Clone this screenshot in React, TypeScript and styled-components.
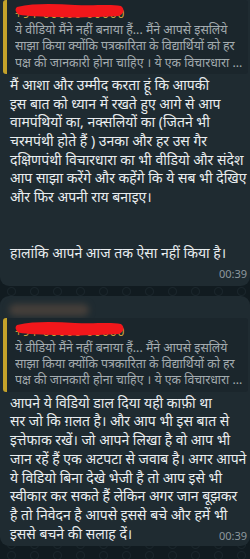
import React from "react";
import styled, { createGlobalStyle } from "styled-components";

const GlobalStyle = createGlobalStyle`
  html, body {
    margin: 0;
    padding: 0;
    background-color: #111b20;
  }
  body {
    font-family: "Noto Sans", Roboto, "Liberation Sans", sans-serif;
    overflow: hidden;
  }
`;

const Chat = styled.div`
  width: 250px;
  height: 559px;
  display: flex;
  flex-direction: column;
  gap: 10px;
  background-color: #111b20;
  background-image: radial-gradient(circle at 50% 50%, transparent 3px, #1a252b 4px, transparent 5px);
  background-size: 23px 11px;
  overflow: hidden;
`;

const Bubble: any = styled.div`
  background-color: #1f2b31;
  border-radius: ${(p: any) => (p.cut ? "0 0 9px 9px" : "9px")};
  padding: ${(p: any) => (p.cut ? "0 2px 5px 3px" : "6px 2px 3px 3px")};
  display: flex;
  flex-direction: column;
`;

const Sender = styled.div`
  width: 80px;
  height: 12px;
  margin: 2px 0 2px 6px;
  border-radius: 6px;
  background-color: #453f3a;
  filter: blur(3px);
`;

const Quote = styled.div`
  position: relative;
  background-color: #1b262c;
  border-left: 4px solid #c4a22a;
  border-radius: 3px;
  padding: 6px 0 3px 8px;
`;

const Phone = styled.div`
  font-size: 12px;
  line-height: 16px;
  color: #c9a53a;
  letter-spacing: 1px;
`;

const Scribble = styled.svg`
  position: absolute;
  left: 8px;
  top: 2px;
`;

const QuoteLine = styled.div`
  font-size: 12.3px;
  line-height: 16.3px;
  color: #a3abaf;
  white-space: nowrap;
  overflow: hidden;
`;

const Body = styled.div`
  padding: 2px 0 0 7px;
`;

const TextLine = styled.div`
  font-size: 14px;
  line-height: 18.7px;
  color: #e9edef;
  white-space: nowrap;
  min-height: 18.7px;
`;

const LastRow = styled.div`
  display: flex;
  align-items: flex-end;
  justify-content: space-between;
`;

const Time = styled.div`
  font-size: 11px;
  line-height: 14px;
  margin-top: 4px;
  color: #8d989e;
  text-align: right;
  padding-right: 1px;
`;

const quoteLines = [
  "ये वीडियो मैंने नहीं बनाया हैं... मैंने आपसे  इसलिये",
  "साझा किया क्योंकि पत्रकारिता के विद्यार्थियों को हर",
  "पक्ष की जानकारी होना चाहिए । ये एक विचारधारा ...",
];

const firstLines = [
  "मैं आशा और उम्मीद करता हूं कि आपकी",
  "इस बात को ध्यान में रखते हुए आगे से आप",
  "वामपंथियों का, नक्सलियों का (जितने भी",
  "चरमपंथी होते हैं ) उनका और हर  उस गैर",
  "दक्षिणपंथी विचारधारा का भी वीडियो और संदेश",
  "आप साझा करेंगे और कहेंगे कि ये सब भी देखिए",
  "और फिर अपनी राय बनाइए।",
  "",
  "",
  "हालांकि आपने आज तक ऐसा नहीं किया है।",
];

const secondLines = [
  "आपने ये विडियो डाल दिया यही काफ़ी था",
  "सर जो कि ग़लत है। और आप भी इस बात से",
  "इत्तेफाक रखें। जो आपने लिखा है वो आप भी",
  "जान रहें हैं एक अटपटा से जवाब है। अगर आपने",
  "ये विडियो बिना देखे भेजी है तो आप इसे भी",
  "स्वीकार कर सकते हैं लेकिन अगर जान बूझकर",
  "है तो निवेदन है आपसे इससे बचे और हमें भी",
];

function RedMark() {
  return (
    <Scribble width="110" height="16" viewBox="0 0 110 16">
      <path
        d="M2 5 C20 1 40 2 60 3 C80 4 95 2 106 4 C110 7 109 12 104 14 C85 15 60 16 40 15 C20 14 6 14 3 12 C0 9 0 7 2 5 Z"
        fill="#f2171b"
      />
    </Scribble>
  );
}

function QuoteBlock() {
  return (
    <Quote>
      <Phone>+91 00000 00000</Phone>
      <RedMark />
      {quoteLines.map((l, i) => (
        <QuoteLine key={i}>{l}</QuoteLine>
      ))}
    </Quote>
  );
}

export default function App() {
  return (
    <>
      <GlobalStyle />
      <Chat>
        <Bubble cut>
          <QuoteBlock />
          <Body>
            {firstLines.map((l, i) => (
              <TextLine key={i}>{l}</TextLine>
            ))}
          </Body>
          <Time>00:39</Time>
        </Bubble>
        <Bubble>
          <Sender />
          <QuoteBlock />
          <Body>
            {secondLines.map((l, i) => (
              <TextLine key={i}>{l}</TextLine>
            ))}
            <LastRow>
              <TextLine>इससे बचने की सलाह दें।</TextLine>
              <Time>00:39</Time>
            </LastRow>
          </Body>
        </Bubble>
      </Chat>
    </>
  );
}
